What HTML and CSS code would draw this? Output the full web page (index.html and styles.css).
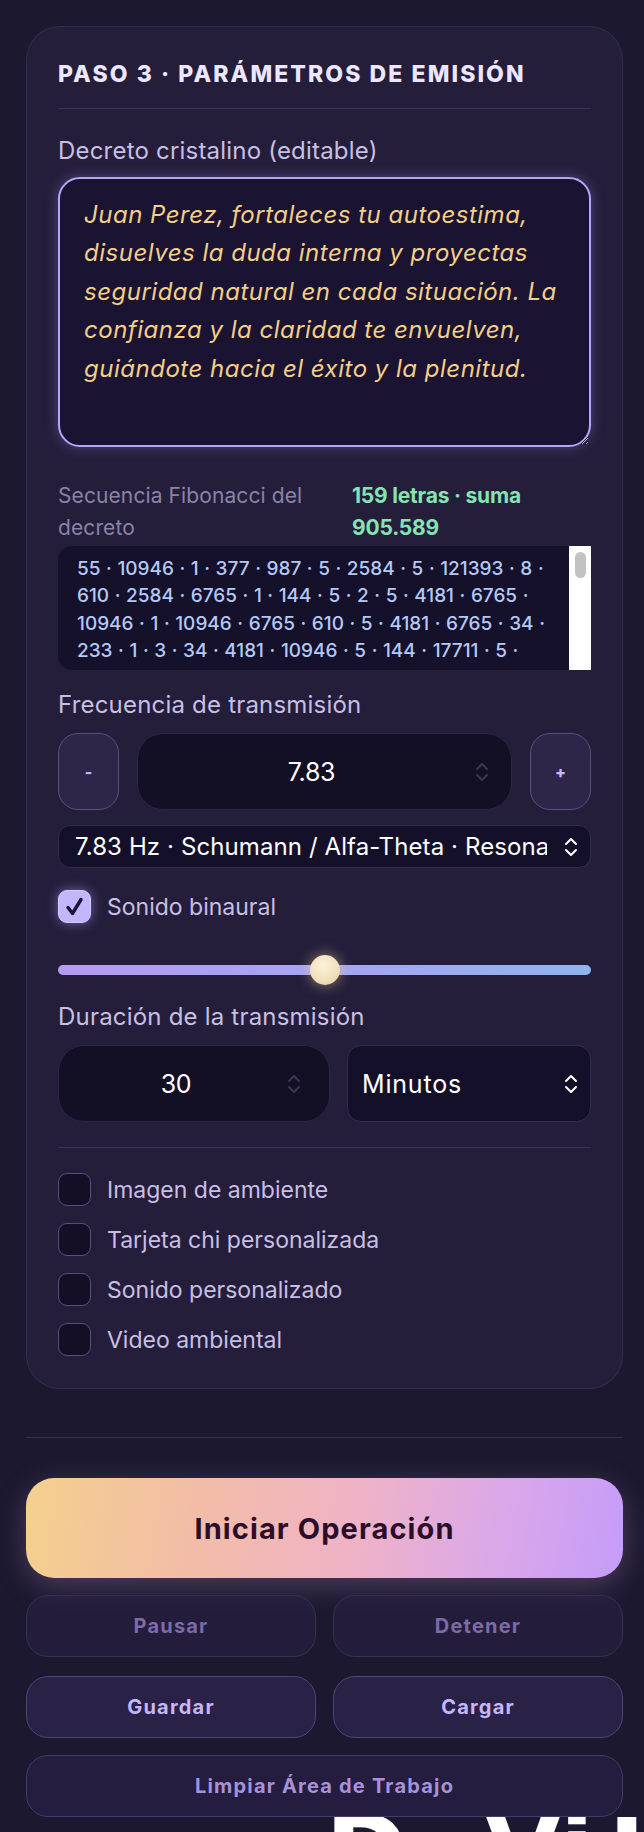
FILE: index.html
```html
<!DOCTYPE html>
<html lang="es">
<head>
<meta charset="utf-8">
<title>Paso 3 · Parámetros de emisión</title>
<link rel="stylesheet" href="styles.css">
</head>
<body>
<main class="page">
  <section class="card">
    <h2 class="card-title">PASO 3 · PARÁMETROS DE EMISIÓN</h2>

    <label class="field-label" for="decree">Decreto cristalino (editable)</label>
    <textarea id="decree" class="decree">Juan Perez, fortaleces tu autoestima, disuelves la duda interna y proyectas seguridad natural en cada situación. La confianza y la claridad te envuelven, guiándote hacia el éxito y la plenitud.</textarea>

    <div class="fib-head">
      <span class="fib-label">Secuencia Fibonacci del decreto</span>
      <span class="fib-stats">159 letras · suma 905.589</span>
    </div>
    <div class="fib-wrap">
      <div class="fib-box">55 · 10946 · 1 · 377 · 987 · 5 · 2584 · 5 · 121393 · 8 · 610 · 2584 · 6765 · 1 · 144 · 5 · 2 · 5 · 4181 · 6765 · 10946 · 1 · 10946 · 6765 · 610 · 5 · 4181 · 6765 · 34 · 233 · 1 · 3 · 34 · 4181 · 10946 · 5 · 144 · 17711 · 5 · 4181 · 144 · 1 · 3 · 10946 · 3 · 1 · 34 · 377 · 6765 · 5 · 2584 · 377 · 1 · 75025 · 987 · 2584 · 610 · 75025 · 5 · 2 · 6765 · 1 · 4181 · 4181 · 5 · 13 · 10946 · 2584 · 34 · 3 · 1 · 3 · 377 · 1 · 6765 · 10946 · 2584 · 1 · 144 · 5 · 377 · 2 · 1 · 3 · 1 · 4181 · 34 · 6765 · 10946 · 1 · 2 · 34 · 610 · 377 · 144 · 1 · 2 · 610 · 377 · 8 · 34 · 1 · 377 · 121393 · 1 · 75025 · 144 · 1 · 2 · 144 · 1 · 2584 · 34 · 3 · 1 · 3 · 6765 · 5 · 5 · 377 · 17711 · 10946 · 5 · 144 · 17711 · 5 · 377 · 13 · 10946 · 34 · 1 · 377 · 3 · 610 · 6765 · 5 · 21 · 1 · 2 · 34 · 1 · 5 · 144 · 5 · 46368 · 34 · 6765 · 610 · 75025 · 144 · 1 · 987 · 144 · 5 · 377 · 34 · 6765 · 10946 · 3</div>
      <div class="fib-scroll"><span class="fib-thumb"></span></div>
    </div>

    <div class="field-label after-box">Frecuencia de transmisión</div>
    <div class="freq-row">
      <button class="step" type="button">-</button>
      <div class="num-field">
        <input class="num-input" type="text" value="7.83" aria-label="Frecuencia">
        <svg class="spin" viewBox="0 0 14 22" width="14" height="22"><path d="M2 8 L7 3 L12 8 M2 14 L7 19 L12 14" fill="none" stroke="#3b3552" stroke-width="2" stroke-linecap="round" stroke-linejoin="round"/></svg>
      </div>
      <button class="step" type="button">+</button>
    </div>

    <div class="select-field preset">
      <span class="sel-clip">
        <select aria-label="Preset de frecuencia">
          <option>7.83 Hz · Schumann / Alfa-Theta · Resonancia terrestre</option>
        </select>
      </span>
      <svg class="chev" viewBox="0 0 14 22" width="14" height="22"><path d="M2 8 L7 3 L12 8 M2 14 L7 19 L12 14" fill="none" stroke="#ffffff" stroke-width="2" stroke-linecap="round" stroke-linejoin="round"/></svg>
    </div>

    <label class="check">
      <span class="box on"><svg viewBox="0 0 33 33" width="33" height="33"><path d="M10 17.5 L14.5 23.5 L23 9.5" fill="none" stroke="#191538" stroke-width="3.4" stroke-linecap="round" stroke-linejoin="round"/></svg></span>
      <span class="check-text">Sonido binaural</span>
    </label>

    <input class="range" type="range" min="0" max="100" value="50" aria-label="Intensidad">

    <div class="field-label">Duración de la transmisión</div>
    <div class="dur-row">
      <div class="num-field dur">
        <input class="num-input" type="text" value="30" aria-label="Duración">
        <svg class="spin" viewBox="0 0 14 22" width="14" height="22"><path d="M2 8 L7 3 L12 8 M2 14 L7 19 L12 14" fill="none" stroke="#3b3552" stroke-width="2" stroke-linecap="round" stroke-linejoin="round"/></svg>
      </div>
      <div class="select-field unit">
        <span class="sel-clip">
          <select aria-label="Unidad">
            <option>Minutos</option>
          </select>
        </span>
        <svg class="chev" viewBox="0 0 14 22" width="14" height="22"><path d="M2 8 L7 3 L12 8 M2 14 L7 19 L12 14" fill="none" stroke="#ffffff" stroke-width="2" stroke-linecap="round" stroke-linejoin="round"/></svg>
      </div>
    </div>

    <div class="sep"></div>

    <div class="options">
      <label class="check"><span class="box"></span><span class="check-text">Imagen de ambiente</span></label>
      <label class="check"><span class="box"></span><span class="check-text">Tarjeta chi personalizada</span></label>
      <label class="check"><span class="box"></span><span class="check-text">Sonido personalizado</span></label>
      <label class="check"><span class="box"></span><span class="check-text">Video ambiental</span></label>
    </div>
  </section>

  <div class="page-sep"></div>

  <div class="actions">
    <button class="btn-primary" type="button">Iniciar Operación</button>
    <div class="btn-pair">
      <button class="btn ghost disabled" type="button">Pausar</button>
      <button class="btn ghost disabled" type="button">Detener</button>
    </div>
    <div class="btn-pair">
      <button class="btn" type="button">Guardar</button>
      <button class="btn" type="button">Cargar</button>
    </div>
    <button class="btn wide" type="button">Limpiar Área de Trabajo</button>
  </div>

  <div class="next-title"><span class="g1">I</span><span class="g2">D</span><span class="g3">Vi</span><span class="g4">I</span></div>
</main>
</body>
</html>
```

FILE: styles.css
```css
* { box-sizing: border-box; }
html, body { margin: 0; padding: 0; }
body {
  background: #1b1830;
  font-family: Inter, "Noto Sans", sans-serif;
  color: #e9e3ff;
  overflow: hidden;
  height: 1832px;
}
.page {
  padding: 26px 21px 0 26px;
}
.card {
  background: #241e3b;
  border: 1px solid rgba(255,255,255,0.07);
  border-radius: 34px;
  padding: 33px 31px 32px 31px;
  display: flex;
  flex-direction: column;
}
.card-title {
  margin: 0;
  font-size: 23px;
  font-weight: 800;
  letter-spacing: 2.1px;
  line-height: 28px;
  color: #ece7ff;
  padding-bottom: 20px;
  border-bottom: 1px solid #3a3258;
  white-space: nowrap;
}
.field-label {
  display: block;
  font-size: 24px;
  line-height: 30px;
  letter-spacing: 0.2px;
  color: #c8bfe4;
  margin-top: 27px;
}
.field-label.after-box { margin-top: 20px; }
.decree {
  display: block;
  margin-top: 11px;
  width: 100%;
  height: 270px;
  background: #1a1432;
  border: 2px solid #b9a4f6;
  border-radius: 22px;
  box-shadow: 0 0 14px rgba(170,140,250,0.35);
  color: #f3cf88;
  font-family: Inter, "Noto Sans", sans-serif;
  font-style: italic;
  font-size: 24px;
  line-height: 38.4px;
  letter-spacing: 0.5px;
  padding: 17px 20px 10px 24px;
  resize: vertical;
  outline: none;
}
.fib-head {
  display: flex;
  gap: 22px;
  margin-top: 33px;
  line-height: 31.5px;
  font-size: 21px;
}
.fib-label {
  flex: 1;
  color: #8a83a6;
  letter-spacing: 0.1px;
}
.fib-stats {
  width: 239px;
  color: #86e3b2;
  font-weight: 700;
  letter-spacing: -0.2px;
}
.fib-wrap {
  margin-top: 3px;
  height: 124px;
  display: flex;
  align-items: flex-start;
  background: #15112a;
  border-radius: 14px 0 0 14px;
  overflow: hidden;
}
.fib-box {
  flex: 1;
  min-width: 0;
  height: 118px;
  overflow: hidden;
  padding: 9px 22px 0 19px;
  color: #b4c9f6;
  font-size: 19px;
  font-weight: 500;
  line-height: 27.3px;
  letter-spacing: 0;
  word-spacing: 0.5px;
}
.fib-scroll {
  flex: none;
  width: 22px;
  height: 124px;
  background: #ffffff;
  display: flex;
  justify-content: center;
  padding-top: 6px;
}
.fib-thumb {
  display: block;
  width: 11px;
  height: 26px;
  border-radius: 6px;
  background: #c2c2c2;
}
.freq-row {
  display: flex;
  gap: 18px;
  margin-top: 13px;
  height: 77px;
}
.step {
  width: 61px;
  flex: none;
  background: #2e2649;
  border: 1.5px solid #5a4f7c;
  border-radius: 20px;
  color: #c9b5ff;
  font-family: Inter, sans-serif;
  font-size: 16px;
  font-weight: 800;
  padding: 0;
}
.num-field {
  flex: 1;
  min-width: 0;
  display: flex;
  align-items: center;
  background: #130f24;
  border: 1px solid #2c2545;
  border-radius: 26px;
  padding: 0 22px 0 10px;
}
.num-input {
  flex: 1;
  min-width: 0;
  width: 10px;
  background: transparent;
  border: 0;
  outline: none;
  color: #ffffff;
  text-align: center;
  font-family: Inter, sans-serif;
  font-size: 25px;
  letter-spacing: -0.3px;
  padding: 0;
}
.spin { flex: none; }
.select-field {
  display: flex;
  align-items: center;
  background: #14102a;
  border: 1px solid #342c4f;
  border-radius: 12px;
  padding-right: 12px;
}
.sel-clip {
  flex: 1;
  min-width: 0;
  height: 100%;
  overflow: hidden;
  margin-right: 17px;
  display: flex;
}
.sel-clip select {
  width: 600px;
  flex: none;
  -webkit-appearance: none;
  appearance: none;
  background: transparent;
  border: 0;
  outline: none;
  color: #ffffff;
  font-family: Inter, sans-serif;
  font-size: 24px;
  letter-spacing: 0.1px;
  padding: 0 0 0 16px;
  height: 100%;
}
.chev { flex: none; }
.preset {
  margin-top: 15px;
  height: 43px;
}
.check {
  display: flex;
  align-items: center;
  gap: 16px;
  height: 33px;
}
.preset + .check { margin-top: 22px; }
.box {
  width: 33px;
  height: 33px;
  flex: none;
  border-radius: 9px;
  background: #150f26;
  border: 1.5px solid #5b4c80;
  display: flex;
  align-items: center;
  justify-content: center;
  overflow: hidden;
}
.box svg { display: block; flex: none; }
.box.on {
  background: #c4b6fc;
  border-color: #d4c8ff;
  box-shadow: 0 0 12px rgba(180,160,255,0.55);
}
.check-text {
  font-size: 23px;
  letter-spacing: 0px;
  color: #c8bfe4;
}
.range {
  -webkit-appearance: none;
  appearance: none;
  width: 100%;
  height: 30px;
  margin: 32px 0 0 0;
  background: transparent;
}
.range::-webkit-slider-runnable-track {
  height: 10px;
  border-radius: 5px;
  background: linear-gradient(90deg, #b59bf1 0%, #a6a5f0 50%, #90b4ee 100%);
}
.range::-webkit-slider-thumb {
  -webkit-appearance: none;
  width: 30px;
  height: 30px;
  margin-top: -10px;
  border-radius: 50%;
  background: radial-gradient(circle at 45% 35%, #fbf1dc 0%, #f1dfb8 60%, #dcc392 100%);
  box-shadow: 0 0 14px rgba(245,215,150,0.55);
}
.range + .field-label { margin-top: 17px; }
.dur-row {
  display: flex;
  gap: 17px;
  margin-top: 13px;
  height: 77px;
}
.num-field.dur {
  flex: none;
  width: 272px;
  padding: 0 28px 0 6px;
}
.unit {
  flex: 1;
  min-width: 0;
  border-radius: 14px;
  padding-right: 12px;
}
.unit .sel-clip { margin-right: 12px; }
.unit .sel-clip select { padding-left: 14px; font-size: 25px; letter-spacing: 0.8px; width: 200px; }
.sep {
  margin-top: 25px;
  border-top: 1px solid #3a3258;
}
.options {
  margin-top: 25px;
  display: flex;
  flex-direction: column;
  gap: 17px;
}
.page-sep {
  margin-top: 48px;
  border-top: 1px solid #3a2d4e;
}
.actions {
  margin-top: 40px;
  display: flex;
  flex-direction: column;
  gap: 17px;
}
.btn-primary {
  height: 100px;
  border: 0;
  border-radius: 28px;
  background: linear-gradient(100deg, #f4d08c 0%, #f2bca8 30%, #efb3c6 55%, #dba8e8 78%, #c49cf9 100%);
  box-shadow: 0 8px 30px rgba(230,170,220,0.25);
  color: #2a0e2a;
  font-family: Inter, sans-serif;
  font-size: 29px;
  font-weight: 700;
  letter-spacing: 1.1px;
}
.btn-pair {
  display: flex;
  gap: 17px;
}
.btn-pair + .btn-pair { margin-top: 2px; }
.btn {
  flex: 1;
  height: 62px;
  border-radius: 22px;
  background: #2a2246;
  border: 1.5px solid #4f4575;
  color: #c8b5f7;
  font-family: Inter, sans-serif;
  font-size: 20px;
  font-weight: 700;
  letter-spacing: 1.2px;
}
.btn.disabled {
  background: rgba(42,34,70,0.55);
  border-color: #393055;
  color: #7d6aa9;
}
.btn.wide {
  flex: none;
  color: #a891da;
  background: #241d3f;
  border-color: #453b68;
}
.next-title {
  display: flex;
  height: 15px;
  overflow: hidden;
  color: #ffffff;
  font-family: "DejaVu Sans", sans-serif;
  font-weight: 700;
  font-size: 100px;
  line-height: 0.7;
  margin-left: -26px;
  margin-right: -21px;
}
.next-title span { display: block; }
.g1 { margin-left: -30px; }
.g2 { margin-left: 318px; }
.g3 { margin-left: 76px; }
.g4 { margin-left: 14px; }
```
